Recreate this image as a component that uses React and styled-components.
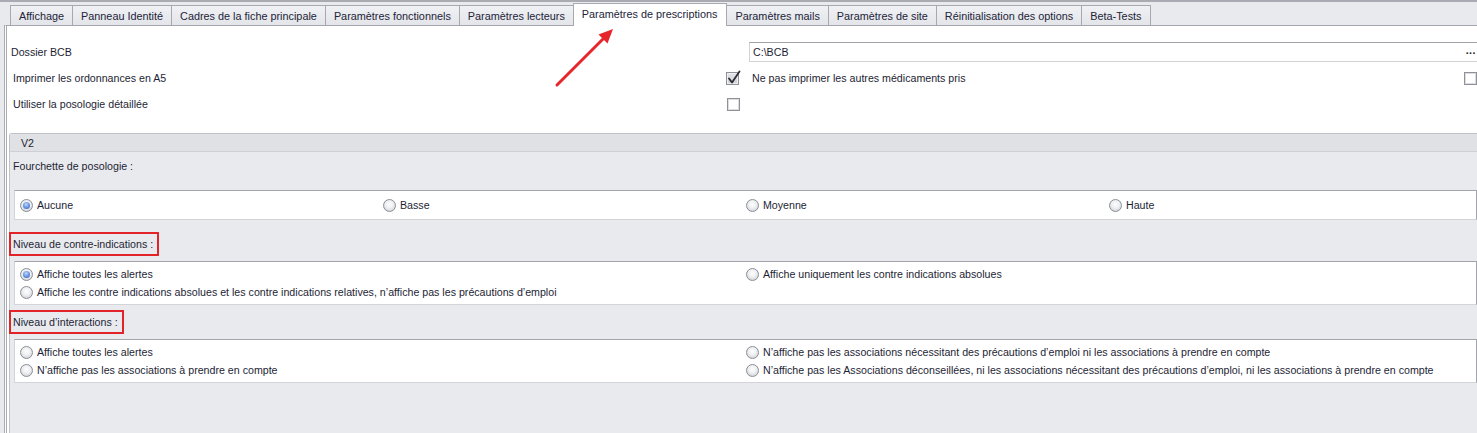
import React from 'react';
import styled, { createGlobalStyle } from 'styled-components';


const GlobalStyle = createGlobalStyle`
    html, body {
        margin: 0;
        padding: 0;
        background: #e9eaee;
    }
    body {
        font-family: "Liberation Sans", Arial, sans-serif;
        font-size: 10.65px;
        color: #1d1e34;
    }
    * {
        box-sizing: border-box;
    }
`;

const Window = styled.div`
    position: relative;
    width: 1477px;
    height: 433px;
    overflow: hidden;
    display: flex;
    flex-direction: column;
    background: #e9eaee;
    border-top: 2px solid #a9aab2;
`;

const TabStrip = styled.div`
    position: relative;
    z-index: 1;
    height: 23px;
    display: flex;
    align-items: flex-end;
    padding-left: 10px;
`;

const Tab = styled.div`
    height: ${props => props.$active ? '23px' : '20px'};
    margin-bottom: ${props => props.$active ? '-1px' : '0'};
    margin-left: -1px;
    padding: 0 ${props => props.$active ? '9px' : '8px'} 0 8px;
    display: flex;
    align-items: center;
    padding-bottom: ${props => props.$active ? '3px' : '0'};
    border: 1px solid #a7a8b0;
    border-bottom: none;
    background: ${props => props.$active ? '#ffffff' : 'linear-gradient(#f0f1f4, #e4e5e9)'};
    color: #22243a;
    font-size: 10.85px;
    white-space: nowrap;

    &:first-child {
        margin-left: 0;
    }
`;

const TabPage = styled.div`
    flex: 1;
    display: flex;
    flex-direction: column;
    margin-left: 4px;
    background: #ffffff;
    border-top: 1px solid #a4a5ad;
    border-left: 3px double #a9aab2;
`;

const TopForm = styled.div`
    display: grid;
    grid-template-columns: 714px 24px 1fr;
    grid-auto-rows: 26px;
    padding: 13px 0 16px 4px;
`;

const FieldLabel = styled.div`
    display: flex;
    align-items: center;
    padding-left: ${props => props.$indent ? '2px' : '0'};
`;

const CheckCell = styled.div`
    display: flex;
    align-items: center;
    padding-left: ${props => props.$shift}px;
`;

const PathInput = styled.div`
    align-self: center;
    height: 20px;
    display: flex;
    align-items: center;
    justify-content: space-between;
    padding: 0 1px 0 3px;
    border: 1px solid #d2d3d7;
    border-top-color: #a0a1a9;
    border-right: none;
    color: #1d1e34;
`;

const Ellipsis = styled.span`
    font-weight: bold;
    letter-spacing: 0.5px;
    color: #1a1a2a;
    margin-top: -4px;
`;

const InlineRow = styled.div`
    display: flex;
    align-items: center;
    justify-content: space-between;
    padding-left: 3px;
`;

const Box = styled.span`
    position: relative;
    width: 13px;
    height: 13px;
    flex: none;
    border: 1px solid #8f9098;
    background: ${props => props.$checked ? 'linear-gradient(#e4e5e8, #cfd0d4)' : '#ffffff'};
    box-shadow: inset 0 0 0 1px ${props => props.$checked ? '#eeeff1' : '#dcdde1'};

    svg {
        position: absolute;
        left: 0px;
        top: -3px;
    }
`;

const GroupBox = styled.div`
    flex: 1;
    margin-left: 2px;
    display: flex;
    flex-direction: column;
    background: #e9eaee;
    border-top: 1px solid #c0c1c7;
    border-left: 1px solid #c0c1c7;
    border-top-left-radius: 3px;
`;

const GroupHeader = styled.div`
    height: 18px;
    display: flex;
    align-items: center;
    padding-left: 11px;
    background: #e0e1e5;
    border-bottom: 1px solid #cfd0d5;
`;

const GroupBody = styled.div`
    display: flex;
    flex-direction: column;
    align-items: flex-start;
`;

const SectionLabel = styled.div`
    height: 24px;
    margin-top: ${props => props.$top}px;
    margin-left: -1px;
    display: flex;
    align-items: center;
    padding: 0 4px 0 2px;
    border: 2px solid ${props => props.$marked ? '#e3232a' : 'transparent'};
`;

const OptionBox = styled.div`
    align-self: stretch;
    margin-top: ${props => props.$top}px;
    margin-left: 4px;
    display: grid;
    grid-template-columns: repeat(${props => props.$cols}, ${props => 1452 / props.$cols}px);
    grid-auto-rows: 18px;
    padding: ${props => props.$pad}px 0 ${props => props.$pad}px 5px;
    background: #ffffff;
    border: 1px solid #d3d4d8;
    border-top-color: #a3a4ac;
    border-right-color: #a3a4ac;
`;

const Option = styled.label`
    display: flex;
    align-items: center;
    gap: 4px;
    white-space: nowrap;
`;

const Radio = styled.span`
    position: relative;
    width: 13px;
    height: 13px;
    flex: none;
    border-radius: 50%;
    border: 1px solid #8c8f98;
    background: radial-gradient(circle at 50% 40%, #ffffff 0%, #eeeff1 45%, #c3c4cb 100%);

    &::after {
        content: '';
        display: ${props => props.$checked ? 'block' : 'none'};
        position: absolute;
        left: 2px;
        top: 2px;
        width: 7px;
        height: 7px;
        border-radius: 50%;
        background: radial-gradient(circle at 45% 35%, #c5dafc 0%, #6f9be6 45%, #2f5fb8 100%);
    }
`;

const ArrowMark = styled.svg`
    position: absolute;
    left: 550px;
    top: 20px;
    pointer-events: none;
`;


const tabs = [
    'Affichage',
    'Panneau Identité',
    'Cadres de la fiche principale',
    'Paramètres fonctionnels',
    'Paramètres lecteurs',
    'Paramètres de prescriptions',
    'Paramètres mails',
    'Paramètres de site',
    'Réinitialisation des options',
    'Beta-Tests',
];

const sections = [
    {
        title: 'Fourchette de posologie :',
        marked: false,
        labelTop: 2,
        boxTop: 12,
        cols: 4,
        pad: 5,
        options: [
            { text: 'Aucune', checked: true },
            { text: 'Basse' },
            { text: 'Moyenne' },
            { text: 'Haute' },
        ],
    },
    {
        title: 'Niveau de contre-indications :',
        marked: true,
        labelTop: 12,
        boxTop: 5,
        cols: 2,
        pad: 3,
        options: [
            { text: 'Affiche toutes les alertes', checked: true },
            { text: 'Affiche uniquement les contre indications absolues' },
            { text: 'Affiche les contre indications absolues et les contre indications relatives, n\u2019affiche pas les précautions d\u2019emploi' },
        ],
    },
    {
        title: 'Niveau d\u2019interactions :',
        marked: true,
        labelTop: 5,
        boxTop: 5,
        cols: 2,
        pad: 3,
        options: [
            { text: 'Affiche toutes les alertes' },
            { text: 'N\u2019affiche pas les associations nécessitant des précautions d\u2019emploi ni les associations à prendre en compte' },
            { text: 'N\u2019affiche pas les associations à prendre en compte' },
            { text: 'N\u2019affiche pas les Associations déconseillées, ni les associations nécessitant des précautions d\u2019emploi, ni les associations à prendre en compte' },
        ],
    },
];


function CheckBox({ checked }) {
    return (
        <Box $checked={checked}>
            {checked && (
                <svg width="14" height="15" viewBox="0 0 14 15">
                    <path d="M2 8.5 L5 12.5 L12.5 1.5" fill="none" stroke="#2b2c33" strokeWidth="1.8" strokeLinecap="round" strokeLinejoin="round" />
                </svg>
            )}
        </Box>
    );
}


function App() {

    const tabList = tabs.map(name => {
        return (
            <Tab key={name} $active={name === 'Paramètres de prescriptions'}>{name}</Tab>
        );
    });

    const sectionList = sections.map(section => {
        return (
            <React.Fragment key={section.title}>
                <SectionLabel $top={section.labelTop} $marked={section.marked}>{section.title}</SectionLabel>
                <OptionBox $top={section.boxTop} $cols={section.cols} $pad={section.pad}>
                    {section.options.map(option => (
                        <Option key={option.text}>
                            <Radio $checked={option.checked} />
                            {option.text}
                        </Option>
                    ))}
                </OptionBox>
            </React.Fragment>
        );
    });

    return (
        <Window>
            <GlobalStyle />
            <TabStrip>
                {tabList}
            </TabStrip>
            <TabPage>
                <TopForm>
                    <FieldLabel>Dossier BCB</FieldLabel>
                    <div />
                    <PathInput>
                        <span>C:\BCB</span>
                        <Ellipsis>...</Ellipsis>
                    </PathInput>

                    <FieldLabel $indent>Imprimer les ordonnances en A5</FieldLabel>
                    <CheckCell $shift={1}><CheckBox checked /></CheckCell>
                    <InlineRow>
                        <span>Ne pas imprimer les autres médicaments pris</span>
                        <CheckBox />
                    </InlineRow>

                    <FieldLabel $indent>Utiliser la posologie détaillée</FieldLabel>
                    <CheckCell $shift={2}><CheckBox /></CheckCell>
                    <div />
                </TopForm>
                <GroupBox>
                    <GroupHeader>V2</GroupHeader>
                    <GroupBody>
                        {sectionList}
                    </GroupBody>
                </GroupBox>
            </TabPage>
            <ArrowMark width="70" height="70" viewBox="0 0 70 70">
                <line x1="7" y1="63" x2="54" y2="16" stroke="#e5262b" strokeWidth="3" strokeLinecap="round" />
                <polygon points="63,7 48.5,12.5 57.5,21.5" fill="#e5262b" />
            </ArrowMark>
        </Window>
    );
}

export default App;
